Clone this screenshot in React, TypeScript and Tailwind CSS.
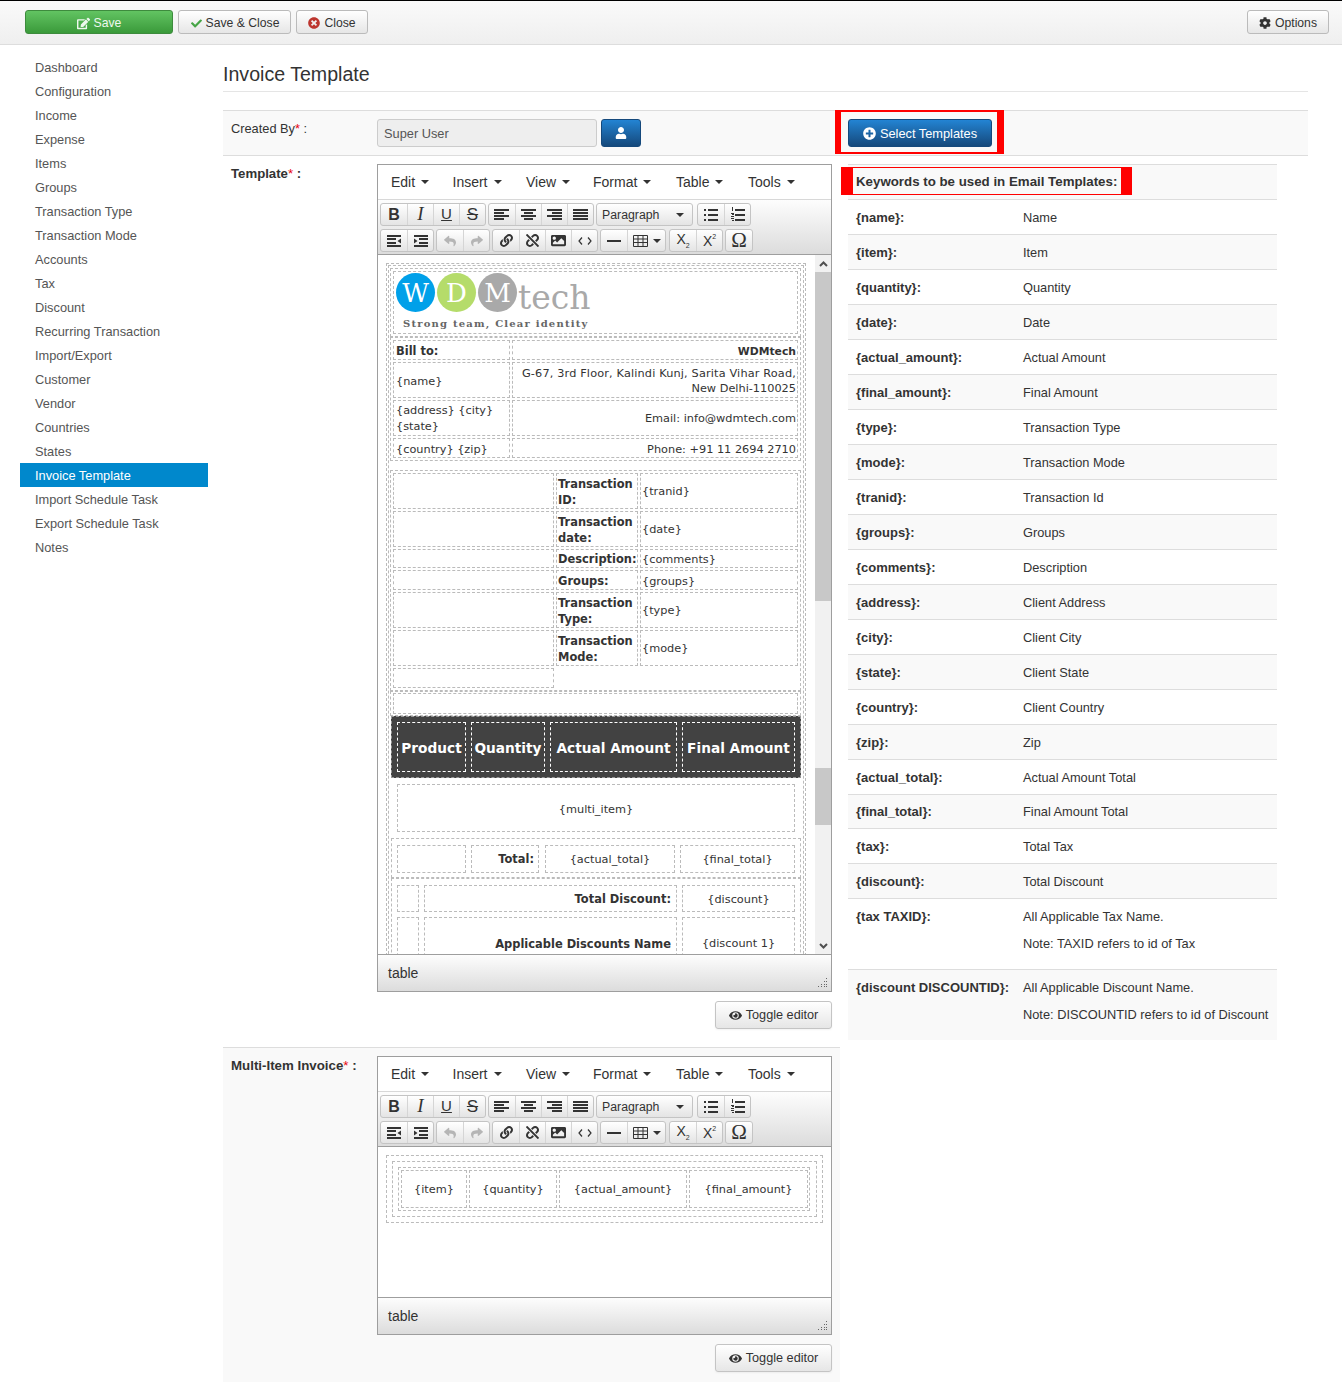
import type { ReactNode } from 'react';
import { FaCheck, FaCog, FaEdit, FaEye, FaImage, FaLink, FaPlusCircle, FaReply, FaShare, FaTimesCircle, FaUnlink, FaUser } from 'react-icons/fa';

const sideItems = [
    'Dashboard', 'Configuration', 'Income', 'Expense', 'Items', 'Groups', 'Transaction Type', 'Transaction Mode',
    'Accounts', 'Tax', 'Discount', 'Recurring Transaction', 'Import/Export', 'Customer', 'Vendor', 'Countries',
    'States', 'Invoice Template', 'Import Schedule Task', 'Export Schedule Task', 'Notes',
];

const keywords: [string, string][] = [
    ['{name}:', 'Name'], ['{item}:', 'Item'], ['{quantity}:', 'Quantity'], ['{date}:', 'Date'],
    ['{actual_amount}:', 'Actual Amount'], ['{final_amount}:', 'Final Amount'], ['{type}:', 'Transaction Type'],
    ['{mode}:', 'Transaction Mode'], ['{tranid}:', 'Transaction Id'], ['{groups}:', 'Groups'],
    ['{comments}:', 'Description'], ['{address}:', 'Client Address'], ['{city}:', 'Client City'],
    ['{state}:', 'Client State'], ['{country}:', 'Client Country'], ['{zip}:', 'Zip'],
    ['{actual_total}:', 'Actual Amount Total'], ['{final_total}:', 'Final Amount Total'], ['{tax}:', 'Total Tax'],
    ['{discount}:', 'Total Discount'],
];

const menus: [string, string][] = [
    ['Edit', 'w-[61.5px]'], ['Insert', 'w-[73.5px]'], ['View', 'w-[67px]'],
    ['Format', 'w-[83px]'], ['Table', 'w-[72px]'], ['Tools', 'w-[60px]'],
];

function Lines({ rows }: { rows: [number, number][] }) {
    return (
        <svg width="16" height="14" viewBox="0 0 16 14" fill="#333">
            {rows.map(([x, w], i) => <rect key={i} x={x} y={1 + i * 3} width={w} height="2" />)}
        </svg>
    );
}

function Btn({ children, wide }: { children: ReactNode; wide?: boolean }) {
    return (
        <div className={`${wide ? 'w-[38px]' : 'w-[26px]'} flex items-center justify-center border-l border-[#d5d5d5] first:border-l-0 text-[#333]`}>
            {children}
        </div>
    );
}

function Group({ children, className = '' }: { children: ReactNode; className?: string }) {
    return (
        <div className={`flex h-[23px] rounded-[3px] border border-[#c4c4c4] bg-gradient-to-b from-white to-[#e4e4e4] ${className}`}>
            {children}
        </div>
    );
}

function Caret() {
    return <span className="inline-block w-0 h-0 border-x-[4px] border-x-transparent border-t-[4px] border-t-[#333]" />;
}

function Toolbar() {
    return (
        <div className="h-[55px] border-t border-[#d8d8d8] bg-gradient-to-b from-[#fdfdfd] to-[#dcdcdc] pl-[2px] pt-[3px] flex flex-col gap-[3px]">
            <div className="flex gap-[2px]">
                <Group>
                    <Btn><span className="font-['Liberation_Sans'] font-bold text-[16px]">B</span></Btn>
                    <Btn><span className="font-['Liberation_Serif'] italic text-[19px]">I</span></Btn>
                    <Btn><span className="font-['Liberation_Sans'] underline text-[15px]">U</span></Btn>
                    <Btn><span className="font-['Liberation_Sans'] line-through text-[17px]">S</span></Btn>
                </Group>
                <Group>
                    <Btn><Lines rows={[[0, 15], [0, 10], [0, 15], [0, 10]]} /></Btn>
                    <Btn><Lines rows={[[0, 15], [3, 9], [0, 15], [3, 9]]} /></Btn>
                    <Btn><Lines rows={[[0, 15], [5, 10], [0, 15], [5, 10]]} /></Btn>
                    <Btn><Lines rows={[[0, 15], [0, 15], [0, 15], [0, 15]]} /></Btn>
                </Group>
                <Group className="w-[97px] items-center justify-between pl-[5px] pr-[8px]">
                    <span className="font-['Liberation_Sans'] text-[12.3px] leading-[15px] pt-[1px] text-[#333]">Paragraph</span>
                    <Caret />
                </Group>
                <Group className="ml-[2px]">
                    <Btn>
                        <svg width="16" height="14" viewBox="0 0 16 14" fill="#333">
                            <rect x="5" y="1" width="10" height="2" /><rect x="5" y="6" width="10" height="2" /><rect x="5" y="11" width="10" height="2" />
                            <rect x="1" y="1" width="2" height="2" /><rect x="1" y="6" width="2" height="2" /><rect x="1" y="11" width="2" height="2" />
                        </svg>
                    </Btn>
                    <Btn>
                        <svg width="16" height="15" viewBox="0 0 16 15" fill="#333">
                            <rect x="5" y="2" width="10" height="2" /><rect x="5" y="7" width="10" height="2" /><rect x="5" y="12" width="10" height="2" />
                            <rect x="2" y="0" width="1" height="4" /><rect x="1" y="6" width="3" height="1" /><rect x="2" y="7" width="2" height="1" /><rect x="1" y="9" width="3" height="1" />
                            <rect x="1" y="11" width="3" height="1" /><rect x="2" y="13" width="2" height="1" />
                        </svg>
                    </Btn>
                </Group>
            </div>
            <div className="flex gap-[2px]">
                <Group>
                    <Btn>
                        <svg width="16" height="14" viewBox="0 0 16 14" fill="#333">
                            <rect x="1" y="1" width="14" height="2" /><rect x="1" y="4" width="9" height="2" /><rect x="1" y="8" width="9" height="2" /><rect x="1" y="11" width="14" height="2" />
                            <polygon points="15,4.5 11.5,7 15,9.5" />
                        </svg>
                    </Btn>
                    <Btn>
                        <svg width="16" height="14" viewBox="0 0 16 14" fill="#333">
                            <rect x="1" y="1" width="14" height="2" /><rect x="6" y="4" width="9" height="2" /><rect x="6" y="8" width="9" height="2" /><rect x="1" y="11" width="14" height="2" />
                            <polygon points="1,4.5 4.5,7 1,9.5" />
                        </svg>
                    </Btn>
                </Group>
                <Group>
                    <Btn><FaReply size={12} className="text-[#b5b5b5]" /></Btn>
                    <Btn><FaShare size={12} className="text-[#b5b5b5]" /></Btn>
                </Group>
                <Group>
                    <Btn><FaLink size={13} /></Btn>
                    <Btn><FaUnlink size={13} /></Btn>
                    <Btn><FaImage size={15} /></Btn>
                    <Btn>
                        <svg width="14" height="10" viewBox="0 0 14 10" fill="none" stroke="#333" strokeWidth="1.2"><path d="M4 1.5 1 5l3 3.5M10 1.5 13 5l-3 3.5" /></svg>
                    </Btn>
                </Group>
                <Group>
                    <Btn><div className="w-[14px] h-[2px] bg-[#333]" /></Btn>
                    <Btn wide>
                        <svg width="15" height="12" viewBox="0 0 15 12" fill="none" stroke="#333" className="mr-[5px]">
                            <path d="M.5.5h14v11H.5zM.5 4h14M.5 7.5h14M5 .5v11M10 .5v11" />
                        </svg>
                        <Caret />
                    </Btn>
                </Group>
                <Group className="ml-[1px]">
                    <Btn><span className="font-['Liberation_Sans'] text-[14px] leading-none">X<span className="text-[7px] align-[-4px]">2</span></span></Btn>
                    <Btn><span className="font-['Liberation_Sans'] text-[14px] leading-none">X<span className="text-[7px] align-[7px]">2</span></span></Btn>
                </Group>
                <Group className="w-[28px] justify-center items-center">
                    <span className="font-['Liberation_Serif'] text-[21px] leading-none text-[#333]">Ω</span>
                </Group>
            </div>
        </div>
    );
}

function Editor({ children, contentClass }: { children: ReactNode; contentClass: string }) {
    return (
        <div className="w-[455px] border border-[#9e9e9e] bg-white">
            <div className="h-[34px] flex items-center pl-[13px] bg-white text-[14px] text-[#333]">
                {menus.map(([m, w]) => (
                    <span key={m} className={`${w} flex items-center gap-[6px]`}>{m}<Caret /></span>
                ))}
            </div>
            <Toolbar />
            <div className={`${contentClass} border-t border-[#9e9e9e] flex overflow-hidden font-['DejaVu_Sans'] text-[11.3px] text-[#333]`}>
                {children}
            </div>
            <div className="h-[37px] border-t border-[#9e9e9e] bg-gradient-to-b from-[#fdfdfd] to-[#dcdcdc] flex items-center justify-between pl-[10px] pr-[3px] text-[14px] text-[#333]">
                <span>table</span>
                <svg width="10" height="10" viewBox="0 0 10 10" fill="#666" className="self-end mb-[3px]">
                    <rect x="8" y="0" width="1" height="1" /><rect x="6" y="3" width="1" height="1" /><rect x="8" y="3" width="1" height="1" />
                    <rect x="3" y="6" width="1" height="1" /><rect x="6" y="6" width="1" height="1" /><rect x="8" y="6" width="1" height="1" />
                    <rect x="0" y="8" width="1" height="1" /><rect x="3" y="8" width="1" height="1" /><rect x="6" y="8" width="1" height="1" /><rect x="8" y="8" width="1" height="1" />
                </svg>
            </div>
        </div>
    );
}

function ToggleEditor() {
    return (
        <div className="w-[455px] flex justify-end mt-[9px]">
            <div className="w-[117px] h-[28px] pt-[1px] rounded-[3px] border border-[#c4c4c4] bg-gradient-to-b from-white to-[#e6e6e6] shadow-[0_1px_2px_rgba(0,0,0,0.05)] flex items-center justify-center gap-[4px] text-[12.7px] text-[#333]">
                <FaEye size={13} /> Toggle editor
            </div>
        </div>
    );
}

// dashed helper: mce-item-table look
const dash = 'border border-dashed border-[#bbb]';

function TemplateBody() {
    const meta: [string, string[], string][] = [
        ['h-[36px]', ['Transaction', 'ID:'], '{tranid}'],
        ['h-[36px]', ['Transaction', 'date:'], '{date}'],
        ['h-[19px]', ['Description:'], '{comments}'],
        ['h-[20px]', ['Groups:'], '{groups}'],
        ['h-[36px]', ['Transaction', 'Type:'], '{type}'],
        ['h-[36px]', ['Transaction', 'Mode:'], '{mode}'],
    ];
    return (
        <div className="flex-1 min-w-0 pl-[8px] pt-[8px]">
            <div className={`${dash} w-[420px] p-[1px]`}>
                <div className={`${dash} p-[1px] pt-[2px] pb-[40px]`}>
                    {/* logo */}
                    <div className={`${dash} p-[2px] mr-[1px]`}>
                        <div className={`${dash} h-[63px] pl-[2px] pt-[1px]`}>
                            <div className="flex items-start gap-[2px] font-['DejaVu_Serif'] text-white text-[26px] leading-none">
                                <div className="w-[39px] h-[39px] rounded-full bg-[#00a0e9] flex items-center justify-center">W</div>
                                <div className="w-[39px] h-[39px] rounded-full bg-[#b5dc6a] flex items-center justify-center">D</div>
                                <div className="w-[39px] h-[39px] rounded-full bg-[#a9a9a9] flex items-center justify-center">M</div>
                                <span className="text-[#a9a9a9] text-[33px] -ml-[1px] mt-[8px]">tech</span>
                            </div>
                            <div className="pl-[7px] mt-[3px] text-[10px] font-bold leading-[14px] tracking-[1.2px] text-[#666] font-['DejaVu_Serif'] whitespace-nowrap">Strong team, Clear identity</div>
                        </div>
                    </div>
                    {/* bill to */}
                    <div className={`${dash} p-[2px] mb-[9px] mr-[1px]`}>
                        <div className="grid grid-cols-[117px_1fr] gap-[2px] leading-[13px]">
                            <div className={`${dash} h-[20px] pl-[2px] pt-[3px] font-bold text-[11.45px] flex items-center`}>Bill to:</div>
                            <div className={`${dash} pr-[1px] pt-[3px] font-bold text-[10.8px] flex items-center justify-end`}>WDMtech</div>
                            <div className={`${dash} h-[36px] pl-[2px] pt-[3px] flex items-center`}>{'{name}'}</div>
                            <div className={`${dash} pr-[1px] pt-[2px] text-right leading-[15px] flex items-center justify-end`}>
                                <span><span className="tracking-[0.15px]">G-67, 3rd Floor, Kalindi Kunj, Sarita Vihar Road,</span><br />New Delhi-110025</span>
                            </div>
                            <div className={`${dash} h-[36px] pl-[2px] pt-[2px] leading-[16px] flex items-center`}>
                                <span>{'{address} {city}'}<br />{'{state}'}</span>
                            </div>
                            <div className={`${dash} pr-[1px] pt-[1px] flex items-center justify-end`}>Email: info@wdmtech.com</div>
                            <div className={`${dash} h-[20px] pl-[2px] pt-[2px] flex items-center`}>{'{country} {zip}'}</div>
                            <div className={`${dash} pr-[1px] pt-[2px] flex items-center justify-end`}>Phone: +91 11 2694 2710</div>
                        </div>
                    </div>
                    {/* transaction details */}
                    <div className={`${dash} p-[2px] mr-[1px]`}>
                        <div className="grid grid-cols-[161px_82px_1fr] gap-[2px] leading-[13px]">
                            {meta.map(([h, label, value]) => (
                                <div key={value} className="contents">
                                    <div className={`${dash} ${h}`} />
                                    <div className={`${dash} pl-[1px] pt-[2px] font-bold text-[11.45px] ${label.length > 1 ? 'leading-[16px]' : 'leading-[13px]'} flex flex-col justify-center whitespace-nowrap`}>
                                        {label.map(l => <span key={l}>{l}</span>)}
                                    </div>
                                    <div className={`${dash} pl-[1px] ${label.length > 1 ? 'pt-[1px]' : 'pt-[2px]'} flex items-center`}>{value}</div>
                                </div>
                            ))}
                            <div className={`${dash} h-[20px]`} />
                        </div>
                    </div>
                    {/* spacer table */}
                    <div className={`${dash} p-[1px] pl-[2px] pr-[2px] h-[25px] mr-[1px]`}>
                        <div className={`${dash} h-[21px]`} />
                    </div>
                    {/* header */}
                    <div className="h-[62px] ml-[1px] w-[410px] bg-[#424242] border border-dashed border-[#999] p-[5px] flex gap-[4px] text-white font-bold text-[13.7px] whitespace-nowrap">
                        <div className="w-[69px] pt-[3px] border border-dashed border-white flex items-center justify-center">Product</div>
                        <div className="w-[74px] pt-[3px] ml-[1px] border border-dashed border-white flex items-center justify-center">Quantity</div>
                        <div className="w-[127px] pt-[3px] ml-[1px] border border-dashed border-white flex items-center justify-center">Actual Amount</div>
                        <div className="w-[113px] pt-[3px] ml-[1px] border border-dashed border-white flex items-center justify-center">Final Amount</div>
                    </div>
                    {/* items */}
                    <div className="ml-[1px] w-[410px] px-[6px] pt-[6px] pb-[6px]">
                        <div className={`${dash} h-[48px] pt-[5px] flex items-center justify-center`}>{'{multi_item}'}</div>
                    </div>
                    <div className={`${dash} ml-[1px] w-[410px] pl-[5px] pt-[6px] pb-[4px] flex gap-[5px] h-[40px]`}>
                        <div className={`${dash} w-[69px]`} />
                        <div className={`${dash} w-[68px] pr-[4px] pt-[2px] font-bold text-[11.45px] flex items-center justify-end`}>Total:</div>
                        <div className={`${dash} w-[130px] pt-[2px] ml-[1px] flex items-center justify-center`}>{'{actual_total}'}</div>
                        <div className={`${dash} w-[115px] pt-[2px] flex items-center justify-center`}>{'{final_total}'}</div>
                    </div>
                    <div className={`${dash} ml-[1px] w-[410px] pl-[5px] pt-[6px] flex flex-col gap-[5px]`}>
                        <div className="flex gap-[5px] h-[27px]">
                            <div className={`${dash} w-[22px]`} />
                            <div className={`${dash} w-[253px] pr-[5px] pt-[3px] font-bold text-[11.45px] flex items-center justify-end`}>Total Discount:</div>
                            <div className={`${dash} w-[113px] pt-[3px] flex items-center justify-center`}>{'{discount}'}</div>
                        </div>
                        <div className="flex gap-[5px] h-[60px]">
                            <div className={`${dash} w-[22px]`} />
                            <div className={`${dash} w-[253px] pr-[5px] pt-[18px] font-bold text-[11.45px] text-right`}>Applicable Discounts Name</div>
                            <div className={`${dash} w-[113px] pt-[18px] text-center`}>{'{discount 1}'}</div>
                        </div>
                    </div>
                </div>
            </div>
        </div>
    );
}

function Scrollbar() {
    return (
        <div className="w-[16px] bg-[#f1f1f1] flex flex-col shrink-0">
            <div className="h-[17px] flex items-center justify-center">
                <svg width="9" height="6" viewBox="0 0 9 6" fill="none" stroke="#505050" strokeWidth="2"><path d="M1 5l3.5-3.5L8 5" /></svg>
            </div>
            <div className="h-[329px] bg-[#c8c8c8]" />
            <div className="h-[167px]" />
            <div className="h-[57px] bg-[#c8c8c8]" />
            <div className="flex-1" />
            <div className="h-[17px] flex items-center justify-center">
                <svg width="9" height="6" viewBox="0 0 9 6" fill="none" stroke="#505050" strokeWidth="2"><path d="M1 1l3.5 3.5L8 1" /></svg>
            </div>
        </div>
    );
}

function MultiBody() {
    return (
        <div className="flex-1 pl-[8px] pt-[8px]">
            <div className={`${dash} w-[437px] p-[5px]`}>
                <div className={`${dash} p-[5px]`}>
                    <div className={`${dash} p-[2px] grid grid-cols-[66px_88px_128px_119px] gap-[2px] w-[412px]`}>
                        {['{item}', '{quantity}', '{actual_amount}', '{final_amount}'].map(c => (
                            <div key={c} className={`${dash} h-[38px] pt-[2px] flex items-center justify-center`}>{c}</div>
                        ))}
                    </div>
                </div>
            </div>
        </div>
    );
}

export default function App() {
    return (
        <div className="w-[1342px] h-[1382px] overflow-hidden bg-white font-['Liberation_Sans',sans-serif] text-[#333]">
            {/* top bar */}
            <div className="h-[45px] border-t border-black border-b border-b-[#ddd] bg-gradient-to-b from-[#fafafa] to-[#efefef] flex items-center pl-[25px] pr-[13px] pb-[1px] text-[12.2px]">
                <div className="w-[148px] h-[24px] pt-[2px] rounded-[3px] border border-[#3d8b3d] bg-gradient-to-b from-[#62c462] to-[#3a9a3a] flex items-center justify-center gap-[4px] text-[#eef8ee]">
                    <FaEdit size={13} /> Save
                </div>
                <div className="ml-[5px] w-[113px] h-[24px] pt-[2px] pl-[1px] rounded-[3px] border border-[#bbb] bg-gradient-to-b from-white to-[#e6e6e6] flex items-center justify-center gap-[4px]">
                    <FaCheck size={11} className="text-[#46a546]" /> Save &amp; Close
                </div>
                <div className="ml-[5px] w-[72px] h-[24px] pt-[2px] rounded-[3px] border border-[#bbb] bg-gradient-to-b from-white to-[#e6e6e6] flex items-center justify-center gap-[4px]">
                    <FaTimesCircle size={12} className="text-[#bd362f]" /> Close
                </div>
                <div className="ml-auto w-[82px] h-[24px] pt-[2px] rounded-[3px] border border-[#bbb] bg-gradient-to-b from-white to-[#e6e6e6] flex items-center justify-center gap-[4px]">
                    <FaCog size={12} /> Options
                </div>
            </div>

            <div className="flex">
                {/* sidebar */}
                <div className="ml-[20px] w-[188px] mt-[10px] shrink-0 text-[12.8px] text-[#555]">
                    {sideItems.map(s => (
                        <div key={s} className={`h-[24px] pl-[15px] pt-[1px] flex items-center ${s === 'Invoice Template' ? 'bg-[#0088cc] text-white' : ''}`}>{s}</div>
                    ))}
                </div>

                {/* main */}
                <div className="ml-[15px] w-[1085px]">
                    <div className="h-[47px] border-b border-[#e5e5e5] pt-[15px] text-[19.6px] leading-[28px]">Invoice Template</div>
                    <div className="mt-[18px] h-[46px] border-y border-[#ddd] bg-[#f9f9f9] flex items-center text-[12.8px]">
                        <div className="w-[154px] pl-[8px] -mt-[8px]">Created By<span className="text-red-600">*</span> :</div>
                        <div className="w-[220px] h-[28px] pt-[1px] rounded-[3px] border border-[#ccc] bg-[#eee] pl-[6px] flex items-center text-[#555]">Super User</div>
                        <div className="ml-[4px] w-[40px] h-[28px] rounded-[3px] border border-[#15497c] bg-gradient-to-b from-[#2384d3] to-[#15497c] flex items-center justify-center text-white">
                            <FaUser size={12} />
                        </div>
                        <div className="ml-[194px] w-[169px] h-[44px] -mt-[2px] border-l-[6px] border-r-[7px] border-y-2 border-[#f00] pl-[7px] pt-[2px] flex items-center">
                            <div className="w-[144px] h-[28px] pt-[1px] rounded-[3px] border border-[#15497c] bg-gradient-to-b from-[#2384d3] to-[#15497c] flex items-center justify-center gap-[4px] text-white">
                                <FaPlusCircle size={13} /> Select Templates
                            </div>
                        </div>
                    </div>

                    <div className="flex">
                        <div className="w-[617px] shrink-0">
                            <div className="pl-[154px] pt-[8px] pb-[18px] relative">
                                <div className="absolute left-[8px] top-[8px] text-[13.2px] font-bold">Template<span className="text-red-600 font-normal">*</span> :</div>
                                <Editor contentClass="h-[700px]">
                                    <TemplateBody />
                                    <Scrollbar />
                                </Editor>
                                <ToggleEditor />
                            </div>
                            <div className="border-t border-[#ddd] bg-[#f9f9f9] pl-[154px] pt-[8px] pb-[10px] relative">
                                <div className="absolute left-[8px] top-[8px] text-[13.3px] font-bold">Multi-Item Invoice<span className="text-red-600 font-normal">*</span> :</div>
                                <Editor contentClass="h-[151px]">
                                    <MultiBody />
                                </Editor>
                                <ToggleEditor />
                            </div>
                        </div>

                        {/* keywords */}
                        <div className="ml-[8px] w-[429px] mt-[8px] text-[12.8px]">
                            <div className="h-[35px] border-t border-[#ddd] bg-[#f9f9f9] flex items-center">
                                <div className="-ml-[7px] mb-[2px] h-[28px] pt-[1px] border-l-[12px] border-r-[11px] border-y border-[#f00] pl-[3px] pr-[4px] flex items-center font-bold text-[13.3px] whitespace-nowrap">
                                    Keywords to be used in Email Templates:
                                </div>
                            </div>
                            {keywords.map(([k, v], i) => (
                                <div key={k} className={`${k === '{final_total}:' ? 'h-[34px]' : 'h-[35px]'} border-t border-[#ddd] grid grid-cols-[167px_1fr] pl-[8px] pt-[1px] items-center ${i % 2 ? 'bg-[#f9f9f9]' : 'bg-white'}`}>
                                    <span className="font-bold text-[13px]">{k}</span>
                                    <span>{v}</span>
                                </div>
                            ))}
                            <div className="h-[71px] border-t border-[#ddd] grid grid-cols-[167px_1fr] pl-[8px] pt-[10px] leading-[16px]">
                                <span className="font-bold text-[13px]">{'{tax TAXID}:'}</span>
                                <div className="flex flex-col gap-[11px]">
                                    <span>All Applicable Tax Name.</span>
                                    <span>Note: TAXID refers to id of Tax</span>
                                </div>
                            </div>
                            <div className="h-[71px] border-t border-[#ddd] bg-[#f9f9f9] grid grid-cols-[167px_1fr] pl-[8px] pt-[10px] leading-[16px]">
                                <span className="font-bold text-[13px] whitespace-nowrap">{'{discount DISCOUNTID}:'}</span>
                                <div className="flex flex-col gap-[11px]">
                                    <span>All Applicable Discount Name.</span>
                                    <span>Note: DISCOUNTID refers to id of Discount</span>
                                </div>
                            </div>
                        </div>
                    </div>
                </div>
            </div>
        </div>
    );
}
